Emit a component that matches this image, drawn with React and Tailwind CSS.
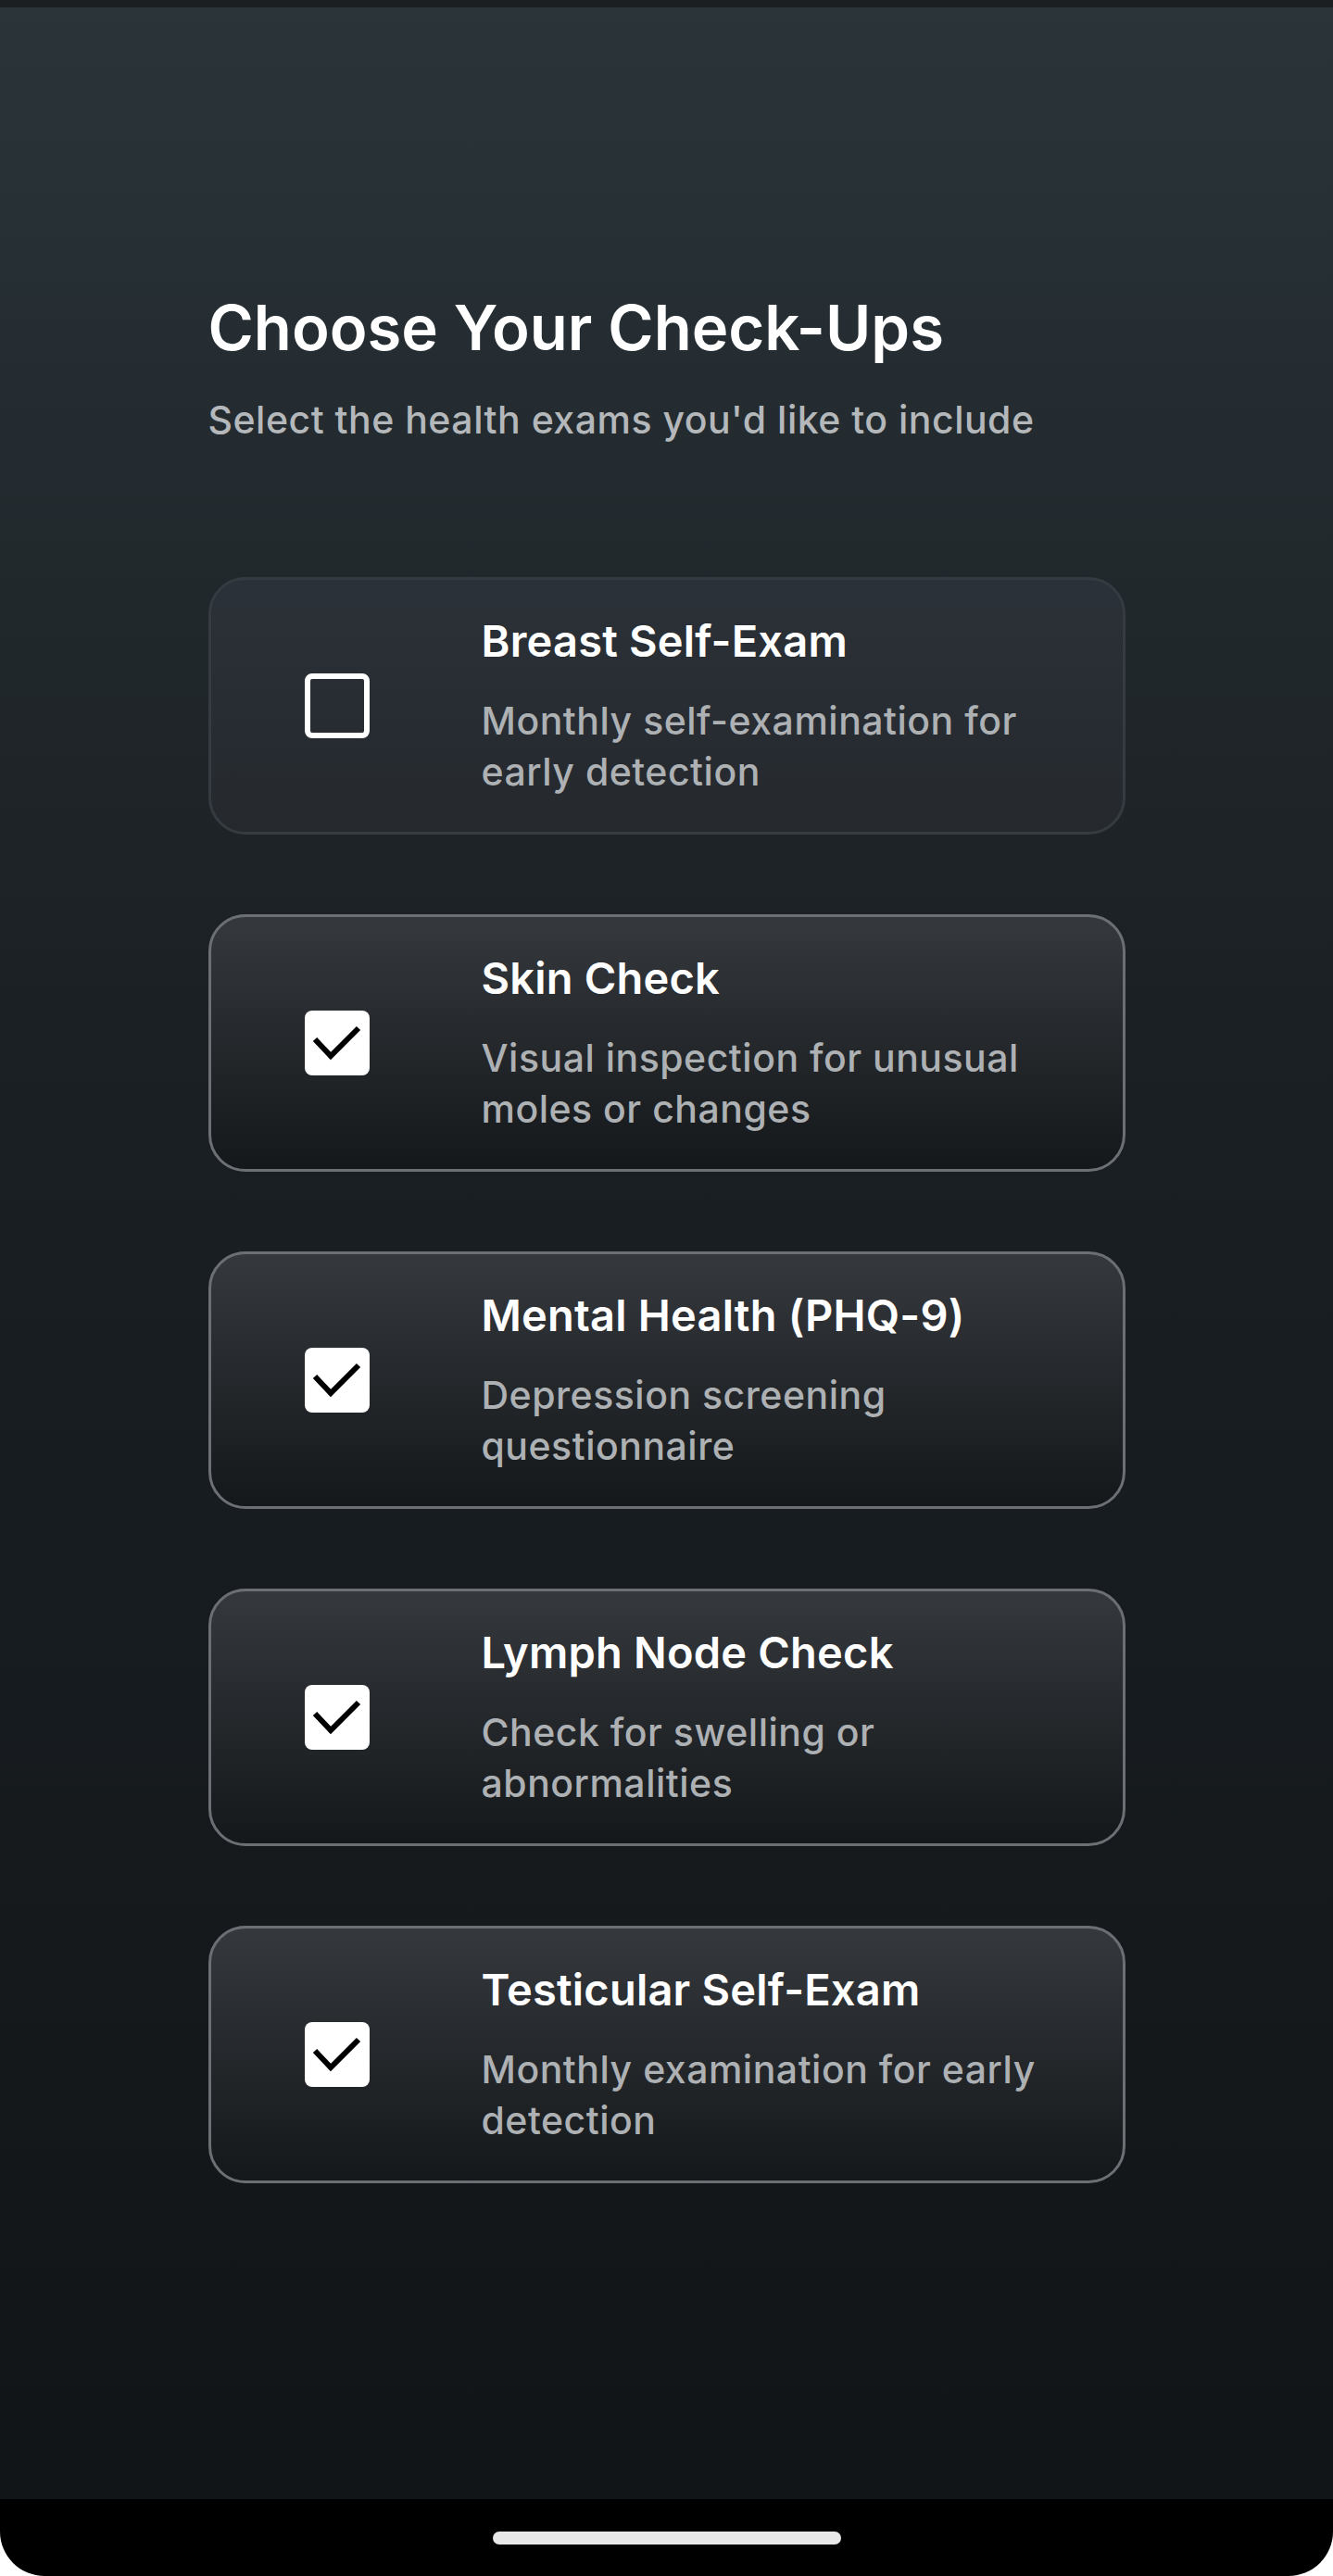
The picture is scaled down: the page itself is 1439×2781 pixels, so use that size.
import React, { useState } from 'react';

const exams = [
  { id: 'breast', title: 'Breast Self-Exam', desc: 'Monthly self-examination for early detection', checked: false },
  { id: 'skin', title: 'Skin Check', desc: 'Visual inspection for unusual moles or changes', checked: true },
  { id: 'mental', title: 'Mental Health (PHQ-9)', desc: 'Depression screening questionnaire', checked: true },
  { id: 'lymph', title: 'Lymph Node Check', desc: 'Check for swelling or abnormalities', checked: true },
  { id: 'testicular', title: 'Testicular Self-Exam', desc: 'Monthly examination for early detection', checked: true },
];

function Checkbox({ checked }) {
  if (!checked) {
    return <div className="w-[70px] h-[70px] shrink-0 rounded-[8px] border-[6px] border-white" />;
  }
  return (
    <div className="w-[70px] h-[70px] shrink-0 rounded-[8px] bg-white flex items-center justify-center">
      <svg viewBox="0 0 70 70" className="w-[70px] h-[70px]" fill="none" stroke="black" strokeWidth="6" strokeLinecap="butt" strokeLinejoin="miter">
        <path d="M11 31 L28 49 L58 19" />
      </svg>
    </div>
  );
}

function ExamCard({ exam, onToggle }) {
  const base = 'w-full h-[278px] rounded-[40px] border-[3px] flex items-center pl-[101px] pr-[60px] gap-[121px] text-left';
  const look = exam.checked
    ? 'border-[#6c7074] bg-gradient-to-b from-[#35393d] to-[#15181b]'
    : 'border-[#353b41] bg-gradient-to-b from-[#2b3138] to-[#25292e]';
  return (
    <button type="button" onClick={onToggle} className={`${base} ${look}`}>
      <Checkbox checked={exam.checked} />
      <div className="flex-1 pt-[4px]">
        <div className="text-[47px] leading-none font-semibold text-white tracking-[0.2px]">{exam.title}</div>
        <div className="mt-[36px] text-[41px] leading-[55px] font-medium text-[#aeb1b4] tracking-[0.5px]">{exam.desc}</div>
      </div>
    </button>
  );
}

export default function App() {
  const [items, setItems] = useState(exams);
  const toggle = (id) => setItems((prev) => prev.map((e) => (e.id === id ? { ...e, checked: !e.checked } : e)));

  return (
    <div className="w-[1439px] h-[2781px] bg-white flex flex-col" style={{ fontFamily: 'Inter, "Noto Sans", sans-serif' }}>
      <div className="h-[8px] bg-[#1c1f22]" />
      <main className="flex-1 bg-gradient-to-b from-[#2a3439] via-[#1b2024] via-40% to-[#111518]">
        <div className="w-[990px] mx-auto pt-[312px]">
          <h1 className="text-[67px] leading-none font-semibold text-white">Choose Your Check-Ups</h1>
          <p className="mt-[46px] text-[41px] leading-none font-medium text-[#b4b8bb] tracking-[0.5px]">Select the health exams you'd like to include</p>
          <div className="mt-[149px] flex flex-col gap-[86px]">
            {items.map((exam) => (
              <ExamCard key={exam.id} exam={exam} onToggle={() => toggle(exam.id)} />
            ))}
          </div>
        </div>
      </main>
      <div className="h-[83px] bg-black rounded-b-[48px] flex justify-center pt-[35px]">
        <div className="w-[376px] h-[14px] rounded-full bg-[#e8e8e8]" />
      </div>
    </div>
  );
}
